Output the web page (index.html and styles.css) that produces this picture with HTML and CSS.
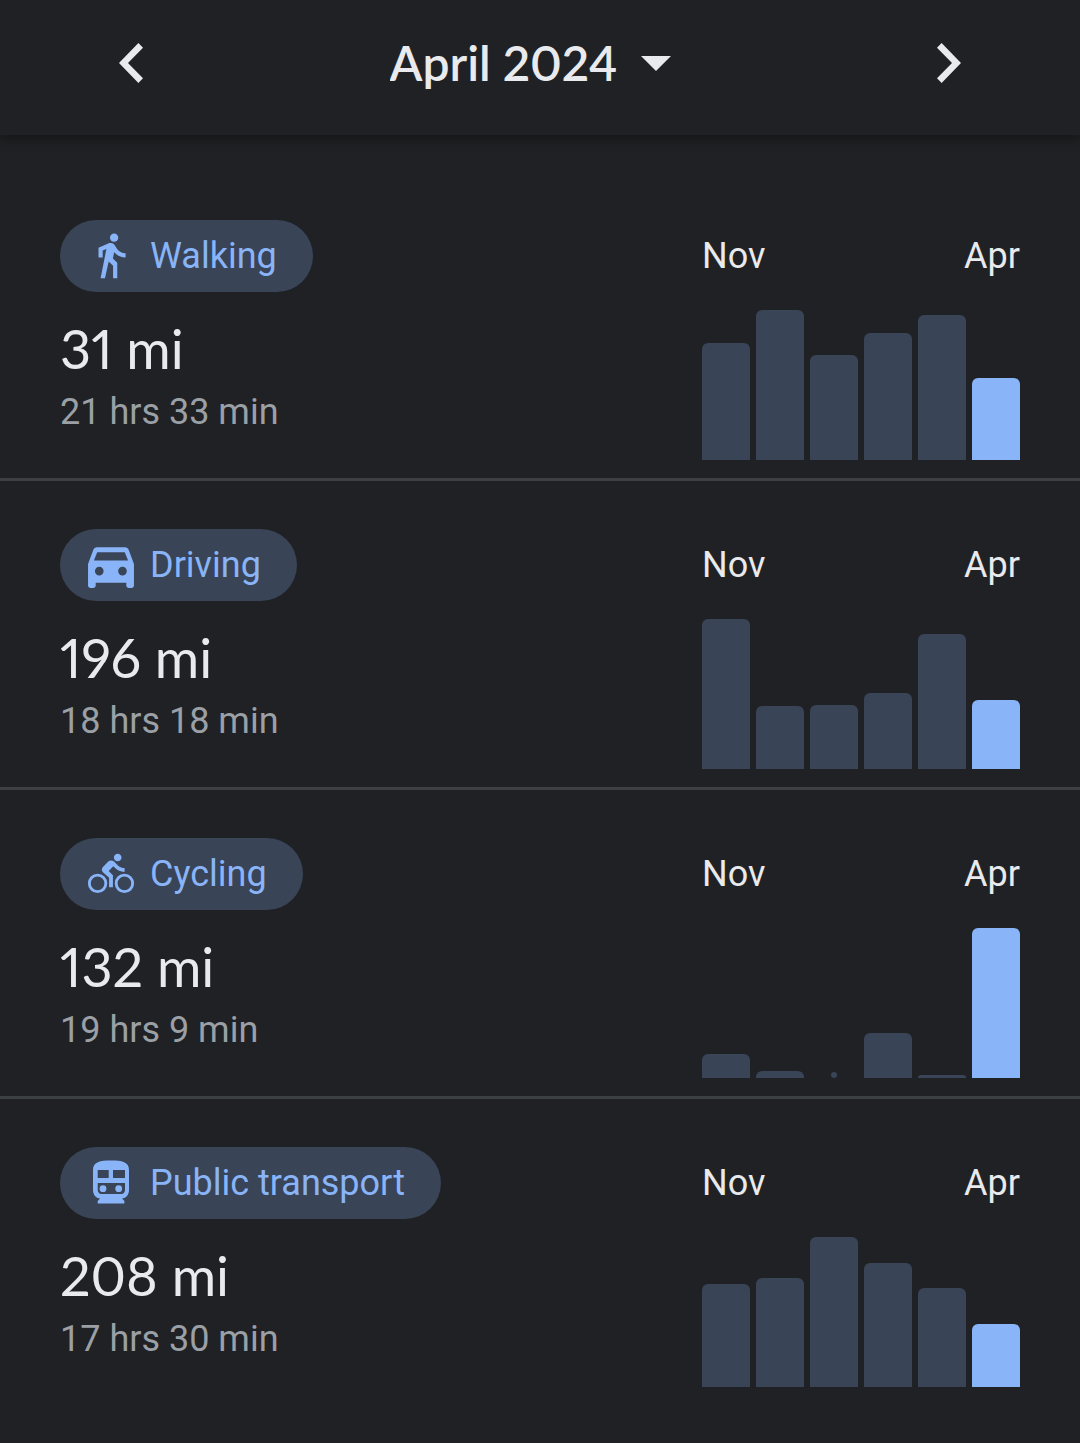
FILE: index.html
```html
<!DOCTYPE html>
<html lang="en">
<head>
    <meta charset="UTF-8">
    <meta name="viewport" content="width=device-width, initial-scale=1.0">
    <title>Timeline</title>
    <link rel="stylesheet" href="styles.css">
</head>
<body>
    <header class="month-bar">
        <button class="nav-btn" aria-label="Previous month">
            <svg width="24" height="40" viewBox="0 0 24 40"><path d="M19.4 0L24 4.7 9 20l15 15.3-4.6 4.7L0 20z"/></svg>
        </button>
        <div class="month-picker">
            <select class="month-select" aria-label="Month">
                <option>April 2024</option>
            </select>
            <svg class="caret" width="30" height="15" viewBox="0 0 30 15"><path d="M0 0h30L15 15z"/></svg>
        </div>
        <button class="nav-btn" aria-label="Next month">
            <svg width="24" height="40" viewBox="0 0 24 40"><path d="M4.6 0L0 4.7 15 20 0 35.3 4.6 40 24 20z"/></svg>
        </button>
    </header>

    <main class="activities">
        <section class="activity">
            <div class="summary">
                <h2 class="chip">
                    <svg class="icon" viewBox="0 0.3 24 24"><path d="M13.5 5.5c1.1 0 2-.9 2-2s-.9-2-2-2-2 .9-2 2 .9 2 2 2zM9.8 8.9L7 23h2.1l1.8-8 2.1 2v6h2v-7.5l-2.1-2 .6-3C14.8 12 16.8 13 19 13v-2c-1.9 0-3.5-1-4.3-2.4l-1-1.6c-.4-.6-1-1-1.7-1-.3 0-.5.1-.8.1L6 8.3V13h2V9.6l1.8-.7"/></svg>
                    Walking
                </h2>
                <p class="distance">31 mi</p>
                <p class="duration">21 hrs 33 min</p>
            </div>
            <div class="chart">
                <div class="range"><span>Nov</span><span>Apr</span></div>
                <div class="bars">
                    <div class="bar" style="height: 117px"></div>
                    <div class="bar" style="height: 150px"></div>
                    <div class="bar" style="height: 105px"></div>
                    <div class="bar" style="height: 127px"></div>
                    <div class="bar" style="height: 145px"></div>
                    <div class="bar current" style="height: 82px"></div>
                </div>
            </div>
        </section>

        <section class="activity">
            <div class="summary">
                <h2 class="chip">
                    <svg class="icon" viewBox="2.2 2.2 19.6 19.6"><path fill-rule="evenodd" d="M18.92 6.01C18.72 5.42 18.16 5 17.5 5h-11c-.66 0-1.21.42-1.42 1.01L3 11.6V20c0 .55.45 1 1 1h1c.55 0 1-.45 1-1v-1h12v1c0 .55.45 1 1 1h1c.55 0 1-.45 1-1v-8.4zM7.4 16.1a1.7 1.7 0 1 1 0-3.4 1.7 1.7 0 0 1 0 3.4zm9.1 0a1.7 1.7 0 1 1 0-3.4 1.7 1.7 0 0 1 0 3.4zM5.3 10.2L6.6 7h10.8l1.3 3.2z"/></svg>
                    Driving
                </h2>
                <p class="distance">196 mi</p>
                <p class="duration">18 hrs 18 min</p>
            </div>
            <div class="chart">
                <div class="range"><span>Nov</span><span>Apr</span></div>
                <div class="bars">
                    <div class="bar" style="height: 150px"></div>
                    <div class="bar" style="height: 63px"></div>
                    <div class="bar" style="height: 64px"></div>
                    <div class="bar" style="height: 76px"></div>
                    <div class="bar" style="height: 135px"></div>
                    <div class="bar current" style="height: 69px"></div>
                </div>
            </div>
        </section>

        <section class="activity">
            <div class="summary">
                <h2 class="chip">
                    <svg class="icon" viewBox="-1.05 -.95 26.1 26.1"><path d="M15.5 5.5c1.1 0 2-.9 2-2s-.9-2-2-2-2 .9-2 2 .9 2 2 2zM10.8 10.5l2.4-2.4.8.8c1.3 1.3 3 2.1 5.1 2.1V9c-1.5 0-2.7-.6-3.6-1.5l-1.9-1.9c-.5-.4-1-.6-1.6-.6s-1.1.2-1.4.6L7.8 8.4c-.4.4-.6.9-.6 1.4 0 .6.2 1.1.6 1.4L11 14v5h2v-6.2z"/><g fill="none" stroke="currentColor" stroke-width="1.5"><circle cx="5" cy="17" r="4.3"/><circle cx="19" cy="17" r="4.3"/></g></svg>
                    Cycling
                </h2>
                <p class="distance">132 mi</p>
                <p class="duration">19 hrs 9 min</p>
            </div>
            <div class="chart">
                <div class="range"><span>Nov</span><span>Apr</span></div>
                <div class="bars">
                    <div class="bar" style="height: 24px"></div>
                    <div class="bar" style="height: 7px"></div>
                    <div class="bar empty"></div>
                    <div class="bar" style="height: 45px"></div>
                    <div class="bar" style="height: 3px"></div>
                    <div class="bar current" style="height: 150px"></div>
                </div>
            </div>
        </section>

        <section class="activity">
            <div class="summary">
                <h2 class="chip">
                    <svg class="icon" viewBox="0 0 50 50"><path fill-rule="evenodd" d="M7 12C7 4 14 2.6 25 2.6S43 4 43 12v20c0 5-3 8-7 8.6l2.4 2.4v2.4H11.700V43l2.4-2.4C10 40 7 37 7 32zM11.7 12v8h11v-8zM27 12v8h12v-8zM11.7 25v7c0 2 1.5 4 3.5 4h20.300c2 0 3.5-2 3.5-4v-7z"/><circle cx="17" cy="30.7" r="3.4"/><circle cx="32.7" cy="30.7" r="3.4"/></svg>
                    Public transport
                </h2>
                <p class="distance">208 mi</p>
                <p class="duration">17 hrs 30 min</p>
            </div>
            <div class="chart">
                <div class="range"><span>Nov</span><span>Apr</span></div>
                <div class="bars">
                    <div class="bar" style="height: 103px"></div>
                    <div class="bar" style="height: 109px"></div>
                    <div class="bar" style="height: 150px"></div>
                    <div class="bar" style="height: 124px"></div>
                    <div class="bar" style="height: 99px"></div>
                    <div class="bar current" style="height: 63px"></div>
                </div>
            </div>
        </section>
    </main>
</body>
</html>
```
FILE: styles.css
```css
:root {
    --bg-color: #202124;
    --text-color: #e8eaed;
    --muted-color: #9aa0a6;
    --accent-color: #8ab4f8;
    --chip-color: #394457;
    --border-color: #3c4043;
}

* {
    box-sizing: border-box;
}

body {
    margin: 0;
    background-color: var(--bg-color);
    color: var(--text-color);
    font-family: Roboto, sans-serif;
    font-size: 36px;
}

svg {
    display: block;
    flex: none;
    fill: currentColor;
}

.month-bar {
    display: flex;
    justify-content: space-between;
    align-items: center;
    padding: 27px 95px 36px;
    box-shadow: 0 3px 12px rgba(0, 0, 0, 0.4);
}

.nav-btn {
    display: flex;
    justify-content: center;
    align-items: center;
    width: 72px;
    height: 72px;
    padding: 0;
    border: none;
    background: none;
    color: inherit;
    cursor: pointer;
}

.month-picker {
    display: flex;
    align-items: center;
    padding-right: 20px;
}

/* the caret sits inside the right padding of the select */
.month-select {
    appearance: none;
    margin: 0 -30px 0 0;
    padding: 0 52px 0 0;
    border: none;
    background: none;
    color: inherit;
    font-family: Lato, sans-serif;
    font-size: 48px;
    font-weight: 600;
    font-variant-numeric: proportional-nums;
    line-height: 72px;
    cursor: pointer;
}

.caret {
    pointer-events: none;
}

.activities {
    padding-top: 37px;
}

.activity {
    display: flex;
    justify-content: space-between;
    padding: 48px 60px 18px;
    border-bottom: 3px solid var(--border-color);
}

.activity:last-child {
    border-bottom: none;
}

.summary {
    display: flex;
    flex-direction: column;
    align-items: flex-start;
}

.chip {
    display: flex;
    align-items: center;
    gap: 14px;
    height: 72px;
    margin: 0;
    padding: 0 36px 0 26px;
    border-radius: 36px;
    background-color: var(--chip-color);
    color: var(--accent-color);
    font-size: 36px;
    font-weight: 400;
}

.icon {
    width: 50px;
    height: 50px;
}

.distance {
    margin: 24px 0 0;
    font-family: Lato, sans-serif;
    font-size: 54px;
    font-variant-numeric: proportional-nums;
    line-height: 66px;
}

.duration {
    margin: 6px 0 0;
    color: var(--muted-color);
    line-height: 48px;
}

.chart {
    display: flex;
    flex-direction: column;
    gap: 18px;
}

.range {
    display: flex;
    justify-content: space-between;
    line-height: 72px;
}

.bars {
    display: flex;
    align-items: flex-end;
    gap: 6px;
    height: 150px;
}

.bar {
    width: 48px;
    border-radius: 6px 6px 0 0;
    background-color: var(--chip-color);
}

.bar.current {
    background-color: var(--accent-color);
}

/* month with no activity: just a dot */
.bar.empty {
    width: 6px;
    height: 6px;
    margin: 0 21px;
    border-radius: 50%;
}
```
